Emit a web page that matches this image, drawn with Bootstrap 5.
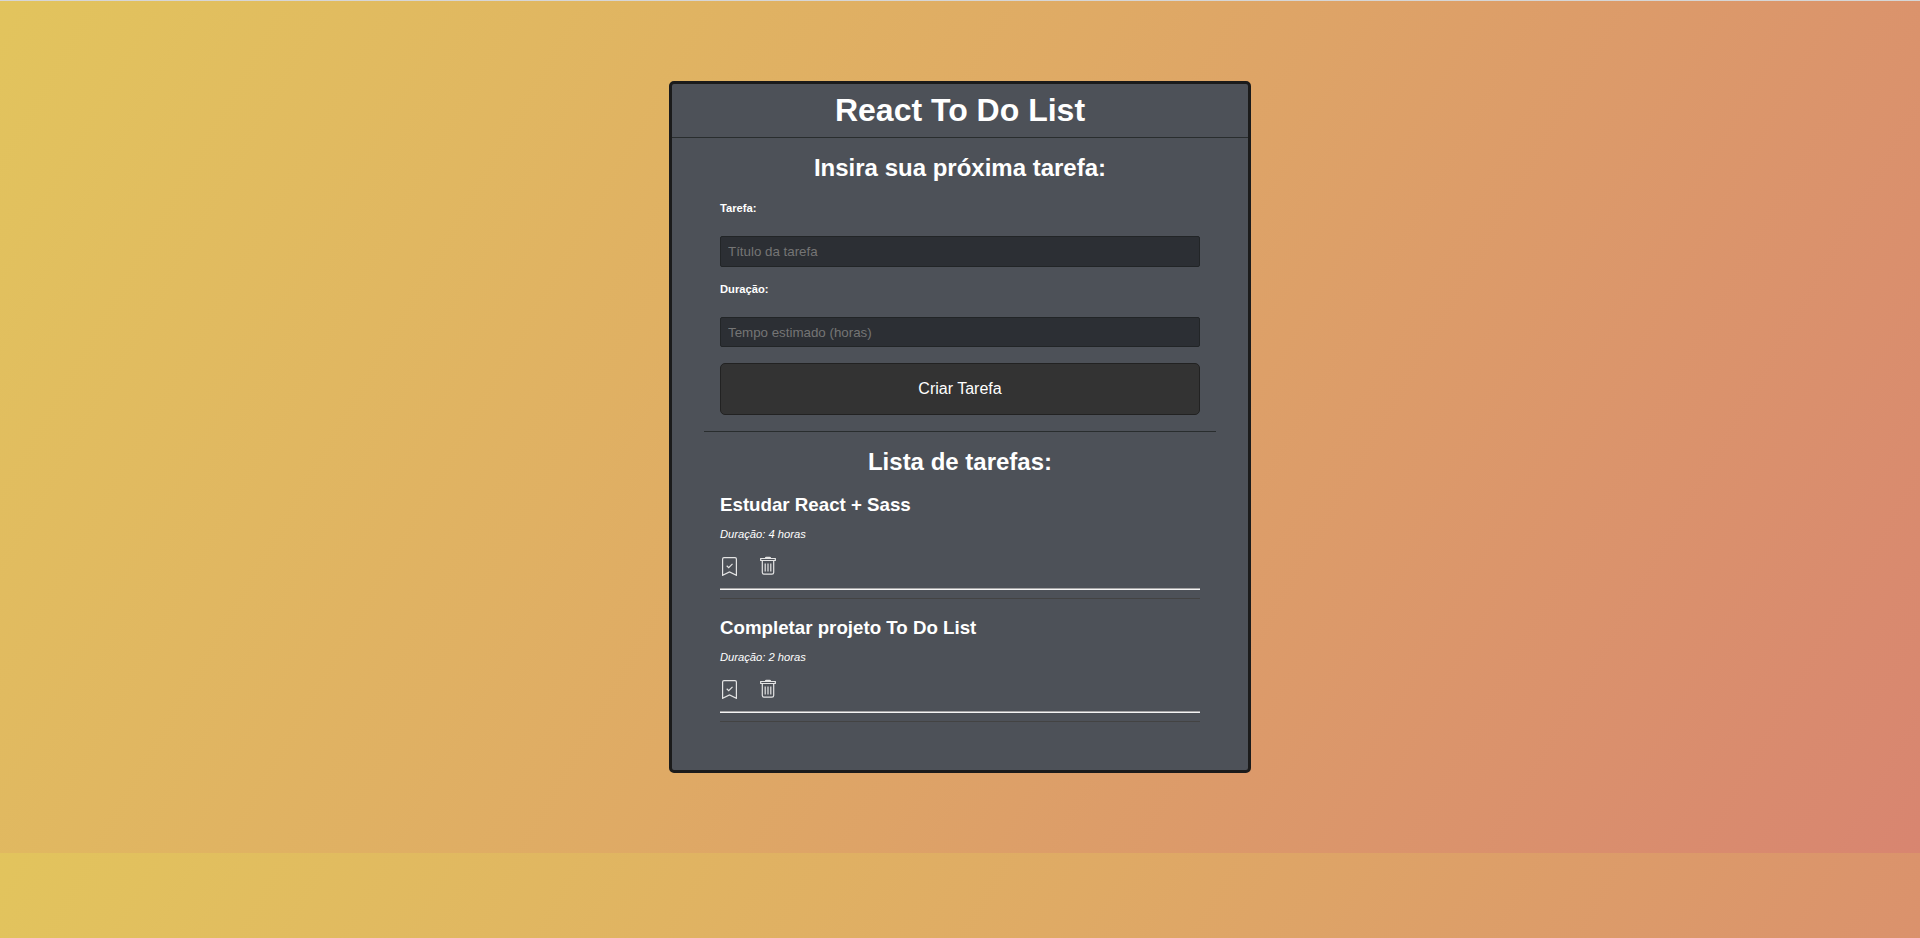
<!DOCTYPE html>
<html lang="pt-BR">
<head>
<meta charset="utf-8">
<title>React To Do List</title>
<link href="https://cdn.jsdelivr.net/npm/bootstrap@5.3.0/dist/css/bootstrap.min.css" rel="stylesheet">
<style>
body{font-family:"Liberation Sans",Arial,sans-serif;color:#fff;min-height:938px;border-top:1px solid #d6d6d6;overflow:hidden;
background:linear-gradient(120deg,#e2c45d 0%,#dfaa65 46%,#d88570 100%) 0 1px/100% 852px repeat-y}
.todo{width:582px;height:692px;margin-top:80px;background:#4d5158;border:3px solid #1b1b1b;border-radius:5px}
.todo-head{height:54px;border-bottom:1px solid #292d2e}
h1{font-size:32px;line-height:37px;padding-top:8px}
h2{font-size:24px;line-height:28px}
.form-zone{width:512px;height:294px;padding:16px 16px 0;border-bottom:1px solid #292d2e}
.list-zone{width:512px;padding:16px 16px 0}
.field-label{font-size:11.2px;line-height:13px;margin-top:16px}
.field-label.first{margin-top:20px}
.field{background:#2c2f34;border:1px solid #222527;border-radius:2px;height:31px;margin-top:21px;padding:0 7px;font-size:13.33px;line-height:28px;color:#fff;outline:0}
.field::placeholder{color:#757575;opacity:1}
.field.short{height:30px}
.create{height:52px;background:#333;border:1px solid #222;border-radius:5px;color:#fff;font-size:16px}
.task{height:107px;border-bottom:1px solid #434343;margin-bottom:16px}
.task-in{height:98px;padding-top:2px;background:linear-gradient(#a6a5a6 50%,#f4f4f4 50%) bottom/100% 2px no-repeat}
h3{font-size:18.72px;line-height:22px}
.dur{font-size:11.2px;line-height:13px;margin:12px 0 15px}
.acts{gap:20px}
.acts svg{display:block;fill:none;stroke:#e4e4e4;stroke-width:1.2}
</style>
</head>
<body>
<main class="todo mx-auto">
<header class="todo-head text-center"><h1 class="fw-bold m-0">React To Do List</h1></header>
<form class="form-zone mx-auto d-flex flex-column">
<h2 class="fw-bold text-center m-0">Insira sua próxima tarefa:</h2>
<label class="field-label first fw-bold" for="t">Tarefa:</label>
<input class="field w-100" id="t" placeholder="Título da tarefa">
<label class="field-label fw-bold" for="d">Duração:</label>
<input class="field short w-100" id="d" placeholder="Tempo estimado (horas)">
<button type="button" class="create w-100 mt-3">Criar Tarefa</button>
</form>
<section class="list-zone mx-auto">
<h2 class="fw-bold text-center mb-3">Lista de tarefas:</h2>
<article class="task"><div class="task-in">
<h3 class="fw-bold m-0">Estudar React + Sass</h3>
<p class="dur fst-italic">Duração: 4 horas</p>
<div class="acts d-flex"><svg width="19" height="20"><use href="#bm"/></svg><svg width="19" height="20"><use href="#tr"/></svg></div>
</div></article>
<article class="task"><div class="task-in">
<h3 class="fw-bold m-0">Completar projeto To Do List</h3>
<p class="dur fst-italic">Duração: 2 horas</p>
<div class="acts d-flex"><svg width="19" height="20"><use href="#bm"/></svg><svg width="19" height="20"><use href="#tr"/></svg></div>
</div></article>
</section>
</main>
<svg width="0" height="0" class="d-none"><defs>
<g id="bm"><path d="M2.600 19.300V3Q2.600 1.600 4 1.600H15Q16.400 1.600 16.400 3V19.300L9.500 16Z"/><path d="M6.700 9.700L8.700 11.600L12.500 7.800"/></g>
<g id="tr"><path d="M6.500 2Q6.500 1.400 7.500 1.400H10.500Q11.500 1.400 11.500 2M1.700 2.500H16.300V4.500H1.700ZM3.300 4.500V16.500Q3.400 18.200 5 18.200H13Q14.600 18.200 14.700 16.500V4.500M6.200 7.500V15.500M9 7.500V15.500M11.800 7.500V15.500"/></g>
</defs></svg>
<script src="https://cdn.jsdelivr.net/npm/bootstrap@5.3.0/dist/js/bootstrap.bundle.min.js"></script>
</body>
</html>
